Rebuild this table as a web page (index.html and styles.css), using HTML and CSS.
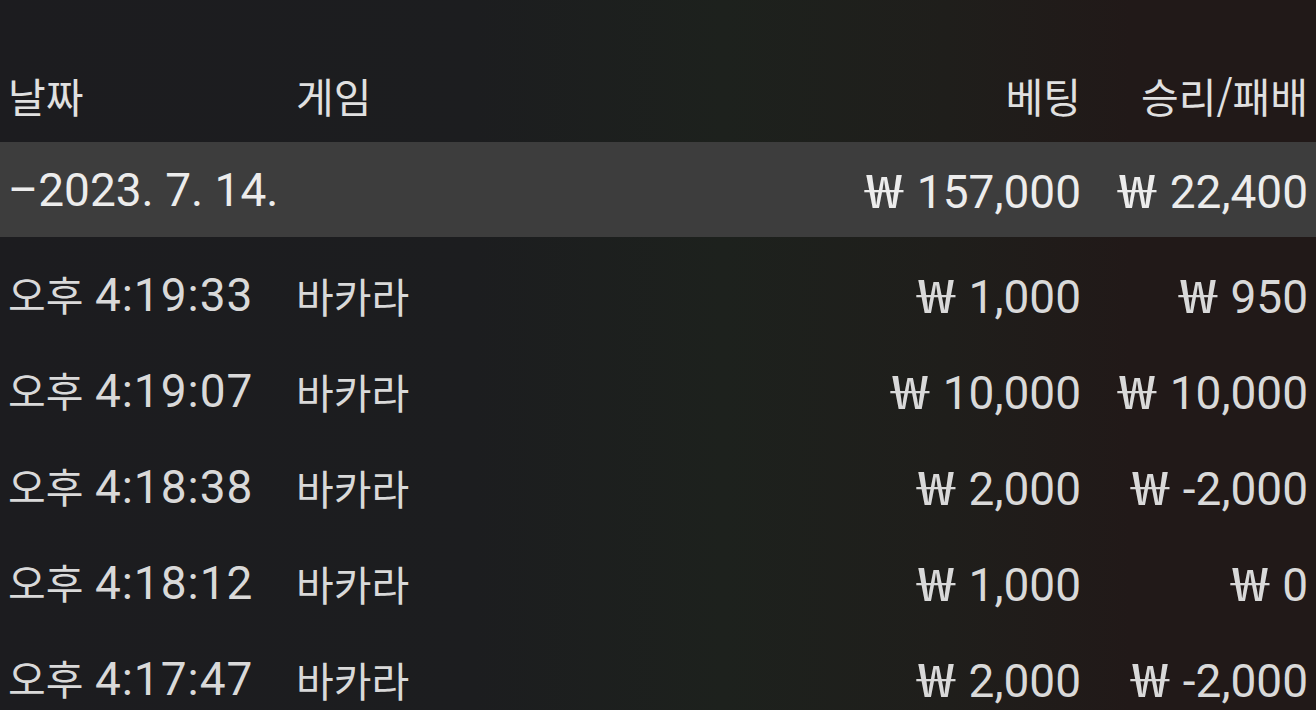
FILE: index.html
```html
<!DOCTYPE html>
<html lang="ko">
<head>
    <meta charset="UTF-8">
    <meta name="viewport" content="width=device-width, initial-scale=1.0">
    <title>베팅 내역</title>
    <link rel="stylesheet" href="styles.css">
</head>
<body>
    <div class="history">
        <div class="row head">
            <span class="date ko">날짜</span>
            <span class="game ko">게임</span>
            <span class="bet ko">베팅</span>
            <span class="result ko">승리/패배</span>
        </div>
        <div class="row day">
            <span class="date">–2023. 7. 14.</span>
            <span class="game"></span>
            <span class="bet"><span class="won">₩</span> 157,000</span>
            <span class="result"><span class="won">₩</span> 22,400</span>
        </div>
        <div class="rows">
            <div class="row">
                <span class="date"><span class="ko">오후</span> <span class="time">4:19:33</span></span>
                <span class="game ko">바카라</span>
                <span class="bet"><span class="won">₩</span> 1,000</span>
                <span class="result"><span class="won">₩</span> 950</span>
            </div>
            <div class="row">
                <span class="date"><span class="ko">오후</span> <span class="time">4:19:07</span></span>
                <span class="game ko">바카라</span>
                <span class="bet"><span class="won">₩</span> 10,000</span>
                <span class="result"><span class="won">₩</span> 10,000</span>
            </div>
            <div class="row">
                <span class="date"><span class="ko">오후</span> <span class="time">4:18:38</span></span>
                <span class="game ko">바카라</span>
                <span class="bet"><span class="won">₩</span> 2,000</span>
                <span class="result"><span class="won">₩</span> -2,000</span>
            </div>
            <div class="row">
                <span class="date"><span class="ko">오후</span> <span class="time">4:18:12</span></span>
                <span class="game ko">바카라</span>
                <span class="bet"><span class="won">₩</span> 1,000</span>
                <span class="result"><span class="won">₩</span> 0</span>
            </div>
            <div class="row">
                <span class="date"><span class="ko">오후</span> <span class="time">4:17:47</span></span>
                <span class="game ko">바카라</span>
                <span class="bet"><span class="won">₩</span> 2,000</span>
                <span class="result"><span class="won">₩</span> -2,000</span>
            </div>
        </div>
    </div>
</body>
</html>
```

FILE: styles.css
```css
html, body { margin: 0; padding: 0; height: 100%; overflow: hidden; }
body {
    font-family: Roboto, "Noto Sans CJK KR", sans-serif;
    color: #d9d9d9;
    background: linear-gradient(90deg, #1c1c1f 0%, #1c1d1f 36%, #1d211d 55%, #1f1e1b 72%, #211918 86%, #211918 100%);
}
.history { padding-top: 48px; }
.row {
    display: grid;
    grid-template-columns: 288px 1fr 300px 227px;
    align-items: center;
    height: 95px;
    padding: 0 8px;
    font-size: 46px;
    line-height: 1;
}
.rows { padding-top: 10px; }
.rows .row { height: 96px; }
.row.head { height: 94px; color: #e0e0e0; }
.row.day { background-color: #3d3d3d; color: #ececec; }
.ko { font-family: "Noto Sans CJK KR", sans-serif; font-size: 41px; }
.time { letter-spacing: 1px; }
.won {
    font-family: "Noto Sans CJK KR", sans-serif;
    display: inline-block;
    width: 42px;
    text-align: center;
    transform: scaleX(1.45);
}
.bet, .result { text-align: right; white-space: nowrap; }
.date, .game { white-space: nowrap; }
```
